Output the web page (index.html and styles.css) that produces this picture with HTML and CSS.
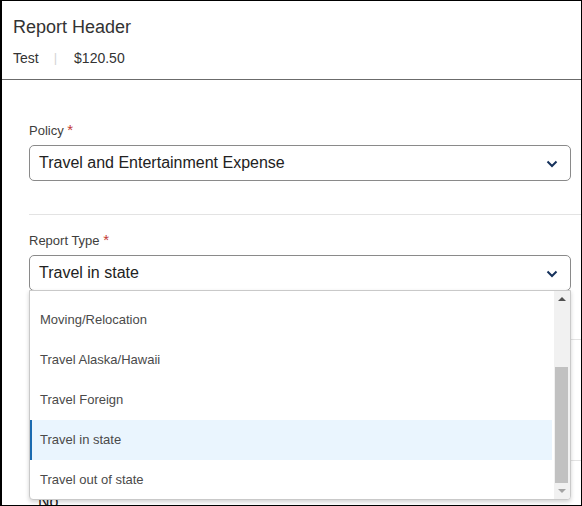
FILE: index.html
```html
<!DOCTYPE html>
<html>
<head>
<meta charset="utf-8">
<link rel="stylesheet" href="styles.css">
</head>
<body>
<div class="frame">
  <div class="header">
    <div class="title">Report Header</div>
    <div class="meta"><span>Test</span><span class="sep">|</span><span>$120.50</span></div>
  </div>
  <div class="content">
    <div class="field first">
      <div class="label">Policy <span class="req">*</span></div>
      <div class="select">
        <span>Travel and Entertainment Expense</span>
        <svg class="chev" width="12" height="8" viewBox="0 0 12 8"><path d="M1.5 1.5 L6 6 L10.5 1.5" fill="none" stroke="#16325c" stroke-width="2"/></svg>
      </div>
    </div>
    <div class="divider"></div>
    <div class="field second">
      <div class="label">Report Type <span class="req">*</span></div>
      <div class="select">
        <span>Travel in state</span>
        <svg class="chev" width="12" height="8" viewBox="0 0 12 8"><path d="M1.5 1.5 L6 6 L10.5 1.5" fill="none" stroke="#16325c" stroke-width="2"/></svg>
      </div>
    </div>
    <div class="divider under1"></div>
    <div class="box"></div>
    <div class="divider under2"></div>
    <div class="value">No</div>

    <div class="dropdown">
      <ul class="options">
        <li>Moving/Relocation</li>
        <li>Travel Alaska/Hawaii</li>
        <li>Travel Foreign</li>
        <li class="active">Travel in state</li>
        <li>Travel out of state</li>
      </ul>
      <div class="scrollbar">
        <div class="arrow up"></div>
        <div class="track"><div class="thumb"></div></div>
        <div class="arrow down"></div>
      </div>
    </div>
  </div>
</div>
</body>
</html>
```
FILE: styles.css
```css
* { box-sizing: border-box; }
html, body { margin: 0; padding: 0; background: #fff; }
body { font-family: "Liberation Sans", Arial, sans-serif; color: #333; }

.frame {
  width: 582px;
  height: 506px;
  border: 1px solid #000;
  border-left-width: 2px;
  overflow: hidden;
  position: relative;
  background: #fff;
}

.header {
  padding: 15px 12px 11px 11px;
  border-bottom: 1px solid #6b6b6b;
}
.title {
  font-size: 18px;
  line-height: 22px;
  color: #333;
}
.meta {
  margin-top: 10px;
  font-size: 14px;
  line-height: 20px;
  color: #333;
  display: flex;
}
.meta .sep {
  color: #d4d4d4;
  margin: 0 17px 0 15px;
  font-size: 13px;
}

.content {
  position: relative;
  padding: 42px 10px 0 27px;
}
.field.second { margin-top: 17px; }
.label {
  font-size: 13px;
  line-height: 16px;
  color: #3e3e3c;
}
.req {
  color: #c23934;
  font-size: 15px;
}
.select {
  margin-top: 6px;
  height: 36px;
  border: 1px solid #8a8a8a;
  border-radius: 5px;
  display: flex;
  align-items: center;
  justify-content: space-between;
  padding: 0 12px 0 9px;
  font-size: 16px;
  color: #222;
}
.chev { display: block; margin-top: 1px; }

.divider {
  height: 1px;
  background: #e3e3e3;
  margin: 33px -10px 0 0;
}
.divider.under1 { margin-top: 48px; }
.box {
  margin-top: 38px;
  height: 62px;
  border: 1px solid #555;
  border-radius: 5px;
}
.divider.under2 { margin-top: 20px; }
.value {
  margin-top: 32px;
  padding-left: 9px;
  font-size: 16px;
  color: #222;
}

.dropdown {
  position: absolute;
  top: 210px;
  left: 27px;
  width: 542px;
  height: 210px;
  background: #fff;
  border: 1px solid #c9c9c9;
  border-radius: 0 0 4px 4px;
  box-shadow: 0 2px 4px rgba(0,0,0,0.18);
  display: flex;
}
.options {
  list-style: none;
  margin: 0;
  padding: 9px 0 0 0;
  flex: 1;
}
.options li {
  height: 40px;
  line-height: 40px;
  padding-left: 10px;
  font-size: 13px;
  color: #4a4a4a;
}
.options li.active {
  background: #eaf5fe;
  box-shadow: inset 2px 0 0 #1b6ab0;
  margin-right: 2px;
}

.scrollbar {
  width: 16px;
  background: #f1f1f1;
  display: flex;
  flex-direction: column;
  border-bottom-right-radius: 3px;
}
.arrow {
  height: 16px;
  display: flex;
  align-items: center;
  justify-content: center;
}
.arrow.up::before {
  content: "";
  border-left: 4px solid transparent;
  border-right: 4px solid transparent;
  border-bottom: 4px solid #505050;
}
.arrow.down::before {
  content: "";
  border-left: 4px solid transparent;
  border-right: 4px solid transparent;
  border-top: 4px solid #a3a3a3;
}
.track {
  flex: 1;
  display: flex;
  flex-direction: column;
  justify-content: flex-end;
  padding: 0 2px 0 1px;
}
.thumb {
  height: 116px;
  background: #c1c1c1;
}
```
